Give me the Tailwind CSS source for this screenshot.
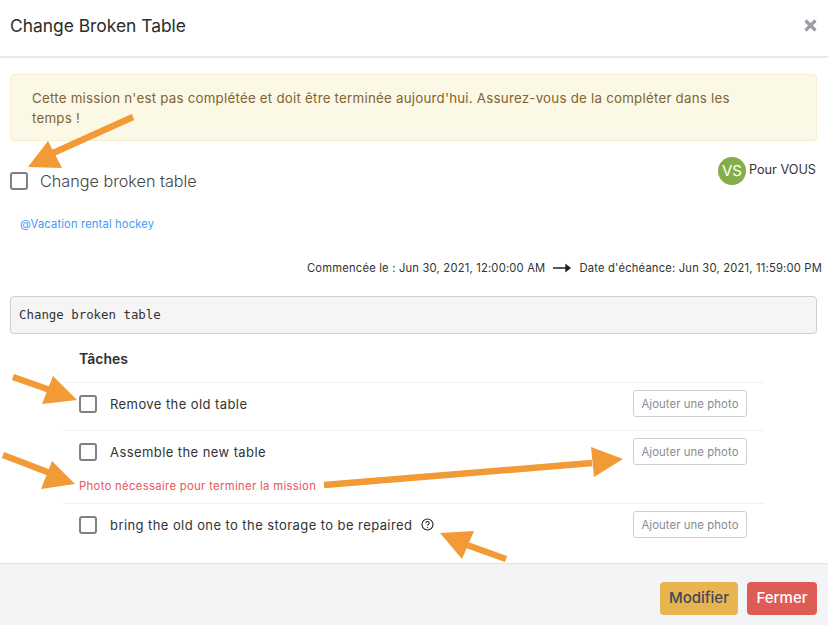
<!DOCTYPE html>
<html lang="fr">
<head>
<meta charset="utf-8">
<script src="https://cdn.jsdelivr.net/npm/@tailwindcss/browser@4"></script>
<title>Change Broken Table</title>
</head>
<body class="bg-white font-['Inter',sans-serif] text-[#363636] overflow-hidden">
<div class="relative w-[828px] h-[625px] flex flex-col overflow-hidden">
  <header class="h-[58px] shrink-0 border-b-2 border-[#e8e8e8] flex items-center justify-between pl-[10px] pr-[11px]">
    <h1 class="text-[17.4px] leading-none text-[#2b2b2b] -mt-1">Change Broken Table</h1>
    <svg class="w-[13px] h-[13px] -mt-[6px]" viewBox="0 0 13 13"><path d="M1.5 1.5L11.5 11.5M11.5 1.5L1.5 11.5" class="stroke-[#9a9fa5]" stroke-width="3.2"/></svg>
  </header>
  <main class="flex-1 px-[10px] pr-[11px] pt-[16px]">
    <div class="h-[67px] border border-[#f7eed2] bg-[#fcf8e6] rounded-[4px] pl-[21px] pr-[60px] pt-[14px] text-[13.3px] leading-[19.5px] tracking-[0.24px] text-[#7f6430]">Cette mission n'est pas complétée et doit être terminée aujourd'hui. Assurez-vous de la compléter dans les temps !</div>
    <div class="flex justify-between h-[64px]">
      <label class="flex items-center h-[79px] gap-[12px]">
        <span class="w-[18px] h-[18px] border-2 border-[#808080] rounded-[3px]"></span>
        <span class="text-[16.2px] font-light text-[#444] mt-px">Change broken table</span>
      </label>
      <div class="flex items-center h-[28px] mt-[16px] gap-[3px] mr-px">
        <span class="w-[28px] h-[28px] rounded-full bg-[#84ae4c] text-white text-[15px] flex items-center justify-center">VS</span>
        <span class="text-[12.7px] text-[#333] -mt-[3px]">Pour VOUS</span>
      </div>
    </div>
    <a class="block ml-[10px] mt-[11px] text-[11.2px] leading-[16px] tracking-[0.15px] text-[#3d9cf5]">@Vacation rental hockey</a>
    <div class="flex justify-end items-center gap-[8px] mt-[26px] -mr-[5px] h-[20px] text-[11.2px] tracking-[0.2px] text-[#333]">
      <span>Commencée le : Jun 30, 2021, 12:00:00 AM</span>
      <svg class="w-[18px] h-[10px]" viewBox="0 0 18 10"><path d="M0 5H16M13 2L17 5L13 8Z" class="stroke-[#222] fill-[#222]" stroke-width="1.4"/></svg>
      <span>Date d'échéance: Jun 30, 2021, 11:59:00 PM</span>
    </div>
    <div class="mt-[18px] h-[38px] border border-[#cfcfcf] bg-[#f5f5f5] rounded-[4px] px-[8px] flex items-center font-['DejaVu_Sans_Mono',monospace] text-[12.4px] text-[#333]">Change broken table</div>
    <section class="ml-[53px] mr-[53px] mt-[14px]">
      <h2 class="pl-[16px] text-[14px] leading-[22px] font-semibold text-[#2e2e2e] h-[34px] pt-0">Tâches</h2>
      <div class="border-t border-[#f1f1f1] h-[48px] pl-[16px] pr-[17px] flex items-start justify-between">
        <div class="flex items-center gap-[13px] h-[42px]">
          <span class="w-[18px] h-[18px] border-2 border-[#808080] rounded-[3px]"></span>
          <span class="text-[13px] tracking-[0.42px] text-[#333] mt-px">Remove the old table</span>
        </div>
        <button class="mt-[7px] w-[114px] h-[27px] pt-[2px] border border-[#ccd0d6] rounded-[3px] text-[11.3px] tracking-[0.1px] text-[#858c94]">Ajouter une photo</button>
      </div>
      <div class="border-t border-[#f1f1f1] h-[73px] pl-[16px] pr-[17px] relative flex items-start justify-between">
        <div class="flex items-center gap-[13px] h-[42px]">
          <span class="w-[18px] h-[18px] border-2 border-[#808080] rounded-[3px]"></span>
          <span class="text-[13px] tracking-[0.42px] text-[#333] mt-[2px]">Assemble the new table</span>
        </div>
        <button class="mt-[7px] w-[114px] h-[27px] pt-[2px] border border-[#ccd0d6] rounded-[3px] text-[11.3px] tracking-[0.1px] text-[#858c94]">Ajouter une photo</button>
        <p class="absolute left-[16px] top-[47px] text-[11.3px] leading-[16px] tracking-[0.32px] text-[#e8565a]">Photo nécessaire pour terminer la mission</p>
      </div>
      <div class="border-t border-[#f1f1f1] pl-[16px] pr-[17px] flex items-start justify-between">
        <div class="flex items-center gap-[13px] h-[42px]">
          <span class="w-[18px] h-[18px] border-2 border-[#808080] rounded-[3px]"></span>
          <span class="text-[13px] tracking-[0.42px] text-[#333] mt-[2px]">bring the old one to the storage to be repaired</span>
          <svg class="w-[13px] h-[13px] -ml-[4px] -mt-px" viewBox="0 0 13 13" fill="none"><circle cx="6.5" cy="6.5" r="5.5" class="stroke-[#222]" stroke-width="1.1"/><path d="M4.8 5.2C4.8 3 8.2 3 8.2 5.1C8.2 6.4 6.5 6.4 6.5 7.8" class="stroke-[#222]" stroke-width="1.1"/><circle cx="6.5" cy="9.6" r="0.7" class="fill-[#222]"/></svg>
        </div>
        <button class="mt-[7px] w-[114px] h-[27px] pt-[2px] border border-[#ccd0d6] rounded-[3px] text-[11.3px] tracking-[0.1px] text-[#858c94]">Ajouter une photo</button>
      </div>
    </section>
  </main>
  <footer class="h-[62px] shrink-0 bg-[#f3f4f6] border-t border-[#e3e4e6] flex items-center justify-end gap-[9px] pr-[11px] pt-[7px]">
    <button class="w-[78px] h-[33px] rounded-[4px] bg-[#e7b44f] text-[#414a58] text-[15px] font-medium">Modifier</button>
    <button class="w-[70px] h-[33px] rounded-[4px] bg-[#de5c55] text-white text-[15px] font-medium">Fermer</button>
  </footer>
  <svg class="absolute left-0 top-0 w-[828px] h-[625px] pointer-events-none" viewBox="0 0 828 625">
    <g class="fill-[#f29a36] stroke-[#f29a36]" stroke-width="6.5">
      <path d="M133 117L53 153"/>
      <path d="M13 377L50 390"/>
      <path d="M3 455L50 473"/>
      <path d="M324 485L592 463"/>
      <path d="M506 559L467 545"/>
    </g>
    <g class="fill-[#f29a36]">
      <polygon points="28,167 48,141 62,168"/>
      <polygon points="53,376 77,400 42,404"/>
      <polygon points="52,461 75,484 41,489"/>
      <polygon points="591,447 623,459 594,477"/>
      <polygon points="440,533 474,531 462,559"/>
    </g>
  </svg>
</div>
</body>
</html>
